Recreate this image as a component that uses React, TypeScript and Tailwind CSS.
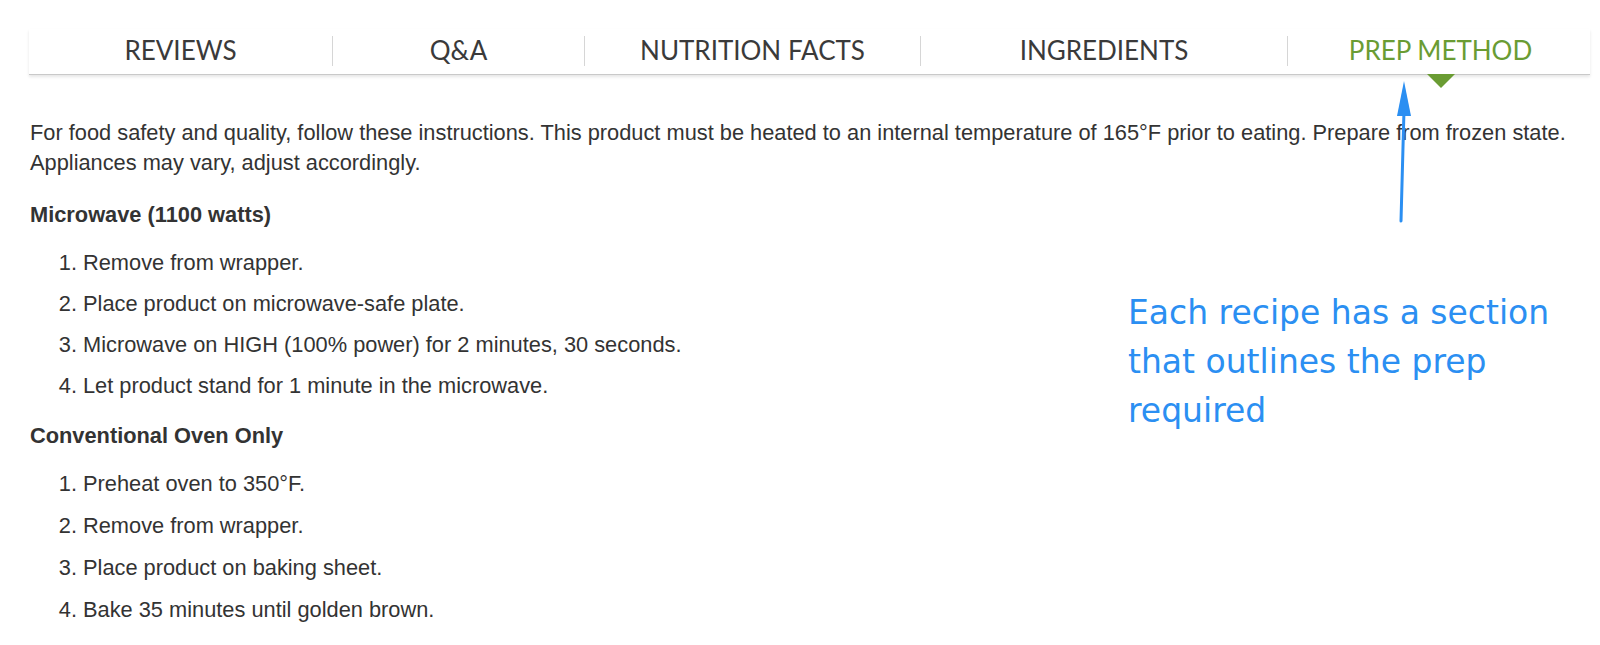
import React from 'react';

const TABS = [
  { label: 'REVIEWS', width: 'w-[303px]' },
  { label: 'Q&A', width: 'w-[251px]' },
  { label: 'NUTRITION FACTS', width: 'w-[335px]' },
  { label: 'INGREDIENTS', width: 'w-[366px]' },
  { label: 'PREP METHOD', width: 'w-[305px]', active: true },
];

const MICROWAVE = [
  'Remove from wrapper.',
  'Place product on microwave-safe plate.',
  'Microwave on HIGH (100% power) for 2 minutes, 30 seconds.',
  'Let product stand for 1 minute in the microwave.',
];

const OVEN = [
  'Preheat oven to 350°F.',
  'Remove from wrapper.',
  'Place product on baking sheet.',
  'Bake 35 minutes until golden brown.',
];

function Steps({ items, wide }: { items: string[]; wide?: boolean }) {
  return (
    <ol className={`list-decimal pl-[53px] mt-[18px] ${wide ? 'space-y-[12px]' : 'space-y-[11px]'}`}>
      {items.map((item) => (
        <li key={item} className="leading-[30px]">
          {item}
        </li>
      ))}
    </ol>
  );
}

export default function App() {
  return (
    <div className="relative w-[1600px] h-[645px] bg-white overflow-hidden pt-[29px]">
      {/* Tab strip */}
      <div className="ml-[29px] w-[1561px] flex items-start pb-[3px] border-b border-[#c9c9c9] shadow-[0_2px_3px_rgba(0,0,0,0.10)]">
        {TABS.map((tab, idx) => (
          <React.Fragment key={tab.label}>
            {idx > 0 && <span className="w-px h-[30px] mt-[7px] bg-[#d6d6d6] flex-none" />}
            <div
              className={`relative flex-none ${tab.width} h-[42px] flex items-center justify-center text-[26px] font-normal font-['Lato',sans-serif] ${
                tab.active ? 'text-[#6a9c33]' : 'text-[#3a3a3a]'
              }`}
            >
              {tab.label}
              {tab.active && (
                <span className="absolute top-[45px] left-1/2 -translate-x-1/2 w-0 h-0 border-l-[14px] border-r-[14px] border-t-[14px] border-l-transparent border-r-transparent border-t-[#6a9c33]" />
              )}
            </div>
          </React.Fragment>
        ))}
      </div>

      {/* Prep method copy */}
      <div className="pl-[30px] pr-[20px] mt-[43px] text-[21.8px] text-[#333333] font-['Liberation_Sans',Arial,sans-serif]">
        <p className="leading-[30px]">
          For food safety and quality, follow these instructions. This product must be heated to an internal temperature of 165°F prior to eating. Prepare from frozen state. Appliances may vary, adjust accordingly.
        </p>

        <h3 className="mt-[22px] font-bold leading-[30px]">Microwave (1100 watts)</h3>
        <Steps items={MICROWAVE} />

        <h3 className="mt-[20px] font-bold leading-[30px]">Conventional Oven Only</h3>
        <Steps items={OVEN} wide />
      </div>

      {/* Annotation */}
      <p className="absolute left-[1128px] top-[288px] w-[450px] text-[33px] leading-[49px] text-[#2b8ff2] font-['DejaVu_Sans',Verdana,sans-serif]">
        Each recipe has a section that outlines the prep required
      </p>
      <svg className="absolute left-0 top-0 pointer-events-none" width="1600" height="645" viewBox="0 0 1600 645">
        <line x1="1401" y1="221" x2="1404" y2="110" stroke="#2b8ff2" strokeWidth="3" strokeLinecap="round" />
        <polygon points="1404,81 1411,116 1397,116" fill="#2b8ff2" />
      </svg>
    </div>
  );
}
